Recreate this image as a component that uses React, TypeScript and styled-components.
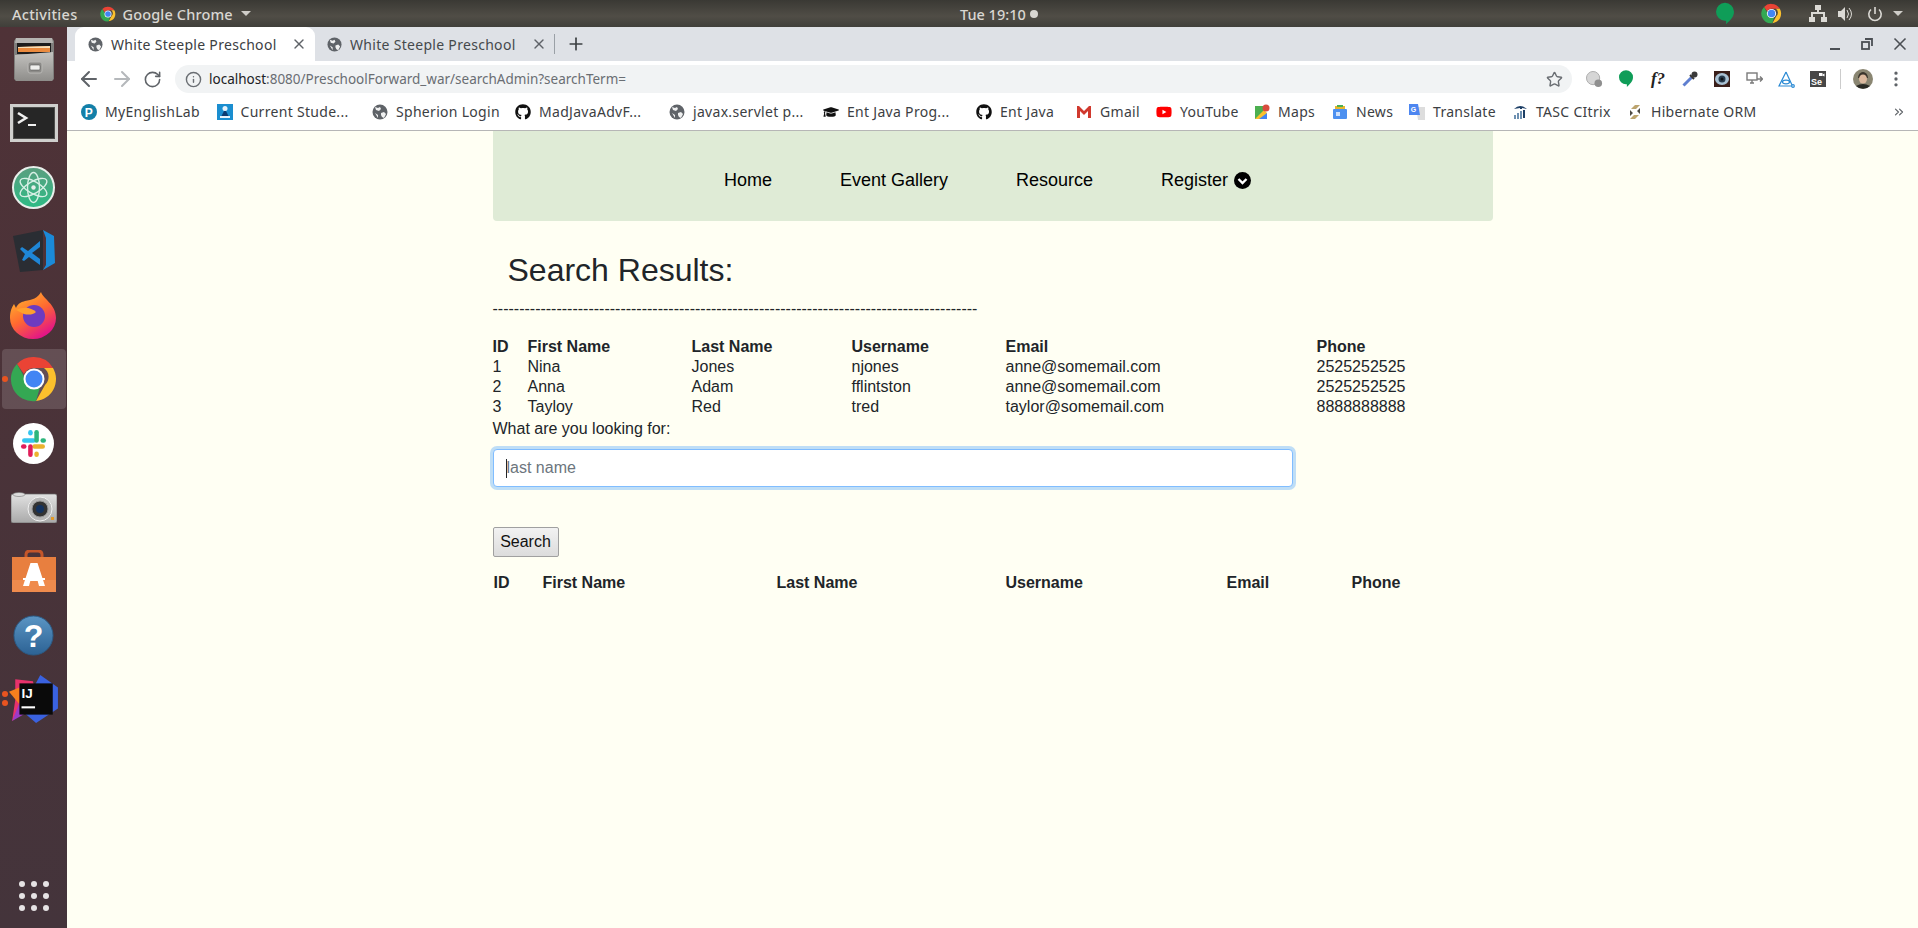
import React from "react";
import styled, { createGlobalStyle } from "styled-components";
import { FaGithub, FaGraduationCap, FaYoutube } from "react-icons/fa";
import { ArrowLeft, ArrowRight, RotateCw, Star, Info, Plus, X, MoreVertical, ChevronsRight } from "lucide-react";

const Global = createGlobalStyle`
  html, body { margin: 0; padding: 0; width: 1918px; height: 928px; overflow: hidden; }
  * { box-sizing: border-box; }
`;
const UI = `"Noto Sans", "Open Sans", sans-serif`;
const WEB = `"Liberation Sans", Arial, sans-serif`;

const Desktop = styled.div`display:flex;flex-direction:column;width:1918px;height:928px;font-family:${WEB};`;
const TopBar = styled.div`height:27px;flex:none;display:grid;grid-template-columns:948px auto 1fr;align-items:center;padding:0 15px 0 12px;background:linear-gradient(#3a3934,#504d46 60%,#403f3a);color:#d9d7d2;font:500 14.5px ${UI};letter-spacing:.3px;`;
const TopLeft = styled.div`display:flex;align-items:center;gap:23px;`;
const AppMenu = styled.div`display:flex;align-items:center;gap:6px;letter-spacing:.15px;`;
const Caret = styled.span`width:0;height:0;border-left:5px solid transparent;border-right:5px solid transparent;border-top:5px solid #cfcdc8;margin-left:2px;`;
const Clock = styled.div`display:flex;align-items:center;gap:4px;letter-spacing:0;`;
const Dot = styled.span`width:8px;height:8px;border-radius:50%;background:#d8d6d1;`;
const TopRight = styled.div`display:flex;align-items:center;justify-content:flex-end;`;
const Gap = styled.span<{ $w: number }>`width:${p => p.$w}px;flex:none;`;
const Body = styled.div`flex:1;display:flex;min-height:0;`;
const Dock = styled.div`width:67px;flex:none;display:flex;flex-direction:column;align-items:center;background:linear-gradient(#4f3237,#44343b);position:relative;`;
const DockSlot = styled.div<{ $active?: boolean }>`width:64px;height:60px;margin:2px 0;flex:none;display:flex;align-items:center;justify-content:center;border-radius:4px;background:${p => p.$active ? "rgba(255,255,255,.14)" : "transparent"};`;
const Spacer = styled.div`flex:1;`;
const Grid9 = styled.div`display:grid;grid-template-columns:repeat(3,6px);gap:6px;margin-bottom:17px;`;
const GridDot = styled.span`width:6px;height:6px;border-radius:50%;background:#e6e3e4;`;
const RunDot = styled.span<{ $top: number }>`position:absolute;left:2px;top:${p => p.$top}px;width:6px;height:6px;border-radius:50%;background:#e95420;`;
const Main = styled.div`flex:1;display:flex;flex-direction:column;min-width:0;`;
const TabStrip = styled.div`height:34px;flex:none;display:flex;align-items:center;background:#dee1e6;padding-left:8px;`;
const Tab = styled.div<{ $active?: boolean }>`width:240px;height:34px;display:flex;align-items:center;padding:0 8px 0 ${p => p.$active ? 13 : 12}px;gap:8px;font:14px ${UI};letter-spacing:.3px;color:${p => p.$active ? "#3c4043" : "#45494c"};background:${p => p.$active ? "#fff" : "transparent"};border-radius:9px 9px 0 0;`;
const TabTitle = styled.span`flex:1;white-space:nowrap;`;
const TabSep = styled.span`width:1px;height:20px;background:#9aa0a6;margin:0 6px 0 -1px;`;
const NewTab = styled.div`display:flex;align-items:center;color:#3c4043;padding-left:5px;`;
const WinBtns = styled.div`margin-left:auto;height:34px;display:flex;align-items:center;gap:17px;padding-right:8px;color:#4b4f54;`;
const Toolbar = styled.div`height:32px;flex:none;display:flex;align-items:flex-start;padding:4px 0 0 10px;background:#fff;color:#5f6368;`;
const NavIcons = styled.div`height:28px;display:flex;align-items:center;gap:9px;margin-right:13px;`;
const Omni = styled.div`width:1397px;height:28px;flex:none;border-radius:14px;background:#f1f3f4;display:flex;align-items:center;padding:0 9px 0 10px;font:13.5px ${UI};color:#6a6e73;gap:7px;`;
const Host = styled.span`color:#202124;`;
const Url = styled.span`flex:1;white-space:nowrap;`;
const Exts = styled.div`flex:1;height:28px;display:flex;align-items:center;padding-left:6px;`;
const ExtCell = styled.div`width:32px;height:28px;flex:none;display:flex;align-items:center;justify-content:center;`;
const FormulaIcon = styled.span`font:italic 700 17px "Liberation Serif", serif;color:#222;`;
const ExtSep = styled.span`width:1px;height:20px;background:#ccc;margin:0 12px 0 6px;`;
const Avatar = styled.div`margin-right:13px;display:flex;`;
const Marks = styled.div`height:38px;flex:none;background:#fff;display:flex;align-items:center;padding-left:14px;border-bottom:1px solid #b6b6b6;font:14px ${UI};letter-spacing:.3px;color:#3c4043;position:relative;`;
const Mark = styled.div<{ $w: number }>`width:${p => p.$w}px;flex:none;display:flex;align-items:center;gap:8px;white-space:nowrap;svg{flex:none;}`;
const MarksMore = styled.div`position:absolute;right:12px;top:11px;color:#5f6368;`;
const Page = styled.div`flex:1;background:#fffff3;color:#212529;display:flex;justify-content:center;font:16px ${WEB};`;
const Container = styled.div`width:1000px;`;
const NavBar = styled.nav`height:90px;padding:8px 10px 0 0;background:#dfebd6;border-radius:0 0 4px 4px;display:flex;align-items:center;justify-content:center;gap:68px;color:#000;font-size:18px;`;
const NavItem = styled.span`display:flex;align-items:center;gap:6px;`;
const Title = styled.h2`margin:30px 0 0;padding-left:15px;font:400 32px/38px ${WEB};`;
const Dashes = styled.div`margin-top:8px;height:24px;line-height:24px;color:#212529;white-space:nowrap;`;
const Table = styled.table`border-collapse:collapse;table-layout:fixed;margin-top:16px;`;
const Th = styled.th<{ $w: number }>`width:${p => p.$w}px;padding:0;height:20px;text-align:left;font-weight:700;line-height:20px;`;
const Td = styled.td`padding:0;height:20px;line-height:20px;`;
const Label = styled.div`height:24px;line-height:24px;`;
const Field = styled.div`width:800px;height:38px;margin-top:8px;border:1px solid #80bdff;border-radius:4px;background:#fff;box-shadow:0 0 0 3px rgba(0,123,255,.25);display:flex;align-items:center;padding-left:12px;color:#6c757d;`;
const Cursor = styled.span`width:1px;height:19px;background:#212529;`;
const Button = styled.button`display:block;margin-top:40px;width:66px;height:30px;padding:0;border:1px solid #a0a0a0;border-radius:2px;background:linear-gradient(#f2f2f2,#dcdcdc);font:16px ${WEB};color:#111;`;
const Table2 = styled(Table)`margin-left:1px;`;

const Globe = ({ s = 16, c = "#5f6368" }: { s?: number; c?: string }) => (
  <svg width={s} height={s} viewBox="0 0 16 16"><circle cx="8" cy="8" r="7.5" fill={c} /><path d="M3 3l3 1 2-1 1 2-2 2-3-1zM9 9l3-1 2 2-2 4-2-1-1-2zM3 9l3 2v3z" fill="#fff" opacity=".9" /></svg>
);
const ChromeLogo = ({ s = 16 }: { s?: number }) => (
  <svg width={s} height={s} viewBox="0 0 48 48">
    <path d="M24 2a22 22 0 0 1 19 11H24a11 11 0 0 0-10 6L7 9A22 22 0 0 1 24 2z" fill="#ea4335" />
    <path d="M43 13a22 22 0 0 1-17 33l9-16a11 11 0 0 0-1-17z" fill="#fbc02d" />
    <path d="M26 46A22 22 0 0 1 7 9l9 16a11 11 0 0 0 14 7l-4 14z" fill="#34a853" />
    <circle cx="24" cy="24" r="10.5" fill="#fff" /><circle cx="24" cy="24" r="8.5" fill="#4285f4" />
  </svg>
);
const Hangout = ({ w = 16, h = 20 }: { w?: number; h?: number }) => (
  <svg width={w} height={h} viewBox="0 0 16 20"><path d="M8 0a8 8 0 0 1 8 8c0 5-4 8-7 11v-3H8A8 8 0 0 1 8 0z" fill="#0f9d58" /></svg>
);
const Cabinet = () => (
  <svg width="40" height="43" viewBox="0 0 40 43">
    <defs><linearGradient id="cab" x1="0" y1="0" x2="0" y2="1"><stop offset="0" stopColor="#c4c3c0" /><stop offset="1" stopColor="#8e8d8a" /></linearGradient></defs>
    <path d="M2 0h36l2 3v38l-2 2H2l-2-2V3z" fill="#7f7e7c" />
    <path d="M2 0h36l1 5H1z" fill="#b5b4b1" />
    <path d="M3 5h34v11H3z" fill="#1d1d1d" />
    <path d="M4 9l32-1v6H4z" fill="#ea8a3e" /><path d="M4 9l32-1v2H4z" fill="#f8e0b8" />
    <path d="M1 17l38-3v27l-1 2H2l-1-2z" fill="url(#cab)" />
    <rect x="14" y="24" width="14" height="11" rx="2" fill="#8c8b88" stroke="#b8b7b4" />
    <rect x="16" y="27" width="10" height="5" rx="1" fill="#efefed" stroke="#555" strokeWidth=".6" />
  </svg>
);
const Terminal = () => (
  <svg width="48" height="38" viewBox="0 0 48 38"><rect width="48" height="38" fill="#cfcfcd" /><rect x="3" y="3" width="42" height="32" fill="#4d4d4b" /><rect x="4" y="4" width="40" height="30" fill="#262626" /><path d="M8 9l8 5-8 5" fill="none" stroke="#f0f0f0" strokeWidth="2.6" /><path d="M18 21h8" stroke="#f0f0f0" strokeWidth="2" /></svg>
);
const Atom = () => (
  <svg width="43" height="43" viewBox="0 0 43 43"><defs><linearGradient id="atm" x1="0" y1="0" x2="0" y2="1"><stop offset="0" stopColor="#5a9e7f" /><stop offset="1" stopColor="#2dbb85" /></linearGradient></defs><circle cx="21.5" cy="21.5" r="20.5" fill="url(#atm)" stroke="#e8efeb" strokeWidth="2" /><g fill="none" stroke="#d7efe5" strokeWidth="1.4"><ellipse cx="21.5" cy="21.5" rx="15" ry="6" transform="rotate(30 21.5 21.5)" /><ellipse cx="21.5" cy="21.5" rx="15" ry="6" transform="rotate(150 21.5 21.5)" /><ellipse cx="21.5" cy="21.5" rx="15" ry="6" transform="rotate(90 21.5 21.5)" /></g><circle cx="21.5" cy="21.5" r="2.2" fill="#e8efeb" /></svg>
);
const VSCode = () => (
  <svg width="42" height="42" viewBox="0 0 42 42"><path d="M0 6l30-6v40L7 42z" fill="#2a2d33" /><path d="M30 0l11 6 1 27-12 7 3-5V8z" fill="#1b8ad8" /><path d="M27 11l-12 10-6-4-2 2 5 5-3 6 2 1 5-4 11 8z" fill="#1f86d6" /><path d="M27 17v12l-8-6z" fill="#2a2d33" /></svg>
);
const Firefox = () => (
  <svg width="47" height="47" viewBox="0 0 47 47"><defs><linearGradient id="ff" x1="0" y1="0" x2=".6" y2="1"><stop offset="0" stopColor="#ffc52e" /><stop offset=".55" stopColor="#ff6a30" /><stop offset="1" stopColor="#e31587" /></linearGradient></defs><path d="M31 0c2 7 15 12 15 26a23 21 0 0 1-46 0c0-7 2-11 4-14l2 4c2-5 6-6 9-7 7-1 13-3 16-9z" fill="url(#ff)" /><circle cx="24" cy="24" r="11" fill="#6e3bc0" /><path d="M6 18c8-4 16-2 20 2-3 3-8 3-12 2z" fill="#ffa02e" /></svg>
);
const Slack = () => (
  <svg width="41" height="41" viewBox="0 0 40 40"><circle cx="20" cy="20" r="20" fill="#fff" /><g strokeWidth="4.4" strokeLinecap="round"><path d="M11 17h9" stroke="#36c5f0" /><path d="M17 9v1" stroke="#36c5f0" /><path d="M23 17V9" stroke="#2eb67d" /><path d="M29 17h1" stroke="#2eb67d" /><path d="M29 23h-8" stroke="#ecb22e" /><path d="M23 30v1" stroke="#ecb22e" /><path d="M17 23v8" stroke="#e01e5a" /><path d="M10 23h1" stroke="#e01e5a" /></g></svg>
);
const Camera = () => (
  <svg width="46" height="31" viewBox="0 0 46 31"><defs><linearGradient id="cam" x1="0" y1="0" x2="0" y2="1"><stop offset="0" stopColor="#e2e2e2" /><stop offset="1" stopColor="#a9a9a9" /></linearGradient></defs><rect y="2" width="46" height="29" rx="2" fill="url(#cam)" stroke="#666" strokeWidth=".7" /><ellipse cx="8" cy="2.5" rx="6" ry="2" fill="#ddd" stroke="#777" strokeWidth=".6" /><circle cx="29" cy="17" r="12" fill="#b7b7b7" stroke="#f0f0f0" /><circle cx="29" cy="17" r="8" fill="#333" stroke="#999" /><circle cx="29" cy="17" r="4" fill="#14325e" /><rect x="40" y="25" width="3" height="3" fill="#e49a2a" /></svg>
);
const Store = () => (
  <svg width="44" height="42" viewBox="0 0 44 42"><path d="M14 10V5q0-4 4-4h8q4 0 4 4v5" fill="none" stroke="#c4562a" strokeWidth="3" /><path d="M0 7h44v35H0z" fill="#e87f3f" /><path d="M0 30h44v12H0z" fill="#ef8b4d" /><path d="M18.5 13h7L33 36h-6l-1.300-5h-7.400L17 36h-6z" fill="#fff" /><rect x="11" y="28" width="22" height="2" fill="#fff" /></svg>
);
const Help = () => (
  <svg width="41" height="41" viewBox="0 0 42 42"><defs><linearGradient id="hlp" x1="0" y1="0" x2="0" y2="1"><stop offset="0" stopColor="#5b95c4" /><stop offset="1" stopColor="#2c6294" /></linearGradient></defs><circle cx="21" cy="21" r="20" fill="url(#hlp)" stroke="#2a5b87" /><text x="21" y="33" textAnchor="middle" fontFamily={WEB} fontWeight="700" fontSize="33" fill="#fff">?</text></svg>
);
const Idea = () => (
  <svg width="50" height="48" viewBox="0 0 48 46"><path d="M6 4l17 2 4 18-24 20 3-20z" fill="#e8326c" /><path d="M0 16l10-4v16z" fill="#f7801e" /><path d="M30 0l17 12v20L26 46 12 34z" fill="#3a62e0" /><path d="M3 44l9-22 12 10z" fill="#9b3bc6" /><rect x="10" y="8" width="32" height="30" fill="#0a0a0a" /><text x="12" y="22" fontFamily={WEB} fontWeight="700" fontSize="13" fill="#fff">IJ</text><rect x="12" y="30" width="13" height="2" fill="#fff" /></svg>
);

const Bm: [number, React.ReactNode, string][] = [
  [135.5, <svg width="16" height="16" viewBox="0 0 16 16"><circle cx="8" cy="8" r="8" fill="#137fa8" /><text x="8" y="12.5" textAnchor="middle" fontSize="12" fontWeight="700" fontFamily={WEB} fill="#fff">P</text></svg>, "MyEnglishLab"],
  [155.5, <svg width="16" height="16" viewBox="0 0 16 16"><rect width="16" height="16" fill="#1a8ed0" /><circle cx="8" cy="4.5" r="2.5" fill="#e8f3fb" /><path d="M4 13l3-6h2l3 6z" fill="#0c3b70" /><rect x="3" y="12" width="10" height="2" fill="#e8f3fb" /></svg>, "Current Stude..."],
  [143, <Globe />, "Spherion Login"],
  [154, <FaGithub size={16} color="#111" />, "MadJavaAdvF..."],
  [154, <Globe />, "javax.servlet p..."],
  [153, <FaGraduationCap size={16} color="#111" />, "Ent Java Prog..."],
  [100, <FaGithub size={16} color="#111" />, "Ent Java"],
  [80, <svg width="16" height="14" viewBox="0 0 16 14"><path d="M1 1v12h3V6l4 4 4-4v7h3V1h-2L8 6 3 1z" fill="#d0392e" /></svg>, "Gmail"],
  [98, <FaYoutube size={16} color="#f00" />, "YouTube"],
  [78, <svg width="16" height="16" viewBox="0 0 16 16"><path d="M1 2h9v13H1z" fill="#4caf50" /><path d="M1 15l9-9 3 3v6z" fill="#fbc02d" /><path d="M5 15l8-6v6z" fill="#4285f4" /><circle cx="12" cy="4" r="3.5" fill="#d84c3e" /></svg>, "Maps"],
  [77, <svg width="16" height="16" viewBox="0 0 16 16"><rect x="1" y="5" width="14" height="10" rx="1" fill="#4d90f0" /><path d="M3 2h10v3H3z" fill="#e9b62c" /><path d="M5 1h6v2H5z" fill="#4caf50" /><path d="M4 8h4v4H4z" fill="#cfe0fb" /></svg>, "News"],
  [103, <svg width="16" height="16" viewBox="0 0 16 16"><path d="M7 3h9v13H9z" fill="#ddd" /><path d="M0 0h9l2 11H0z" fill="#4d86f0" /><text x="4.5" y="8" textAnchor="middle" fontSize="7" fontWeight="700" fontFamily={WEB} fill="#fff">G</text></svg>, "Translate"],
  [115, <svg width="16" height="16" viewBox="0 0 16 16"><path d="M2 5q6-6 13 0l-5-1v1H8V4z" fill="#1d3f66" /><path d="M2 11h2v4H2zM5 9h2v6H5zM8 7h2v8H8z" fill="#6d90b1" /><path d="M11 6h2v8h-2z" fill="#1d3f66" /></svg>, "TASC CItrix"],
  [130, <svg width="16" height="16" viewBox="0 0 16 16"><path d="M4 5l4-4h5L9 5zM12 11l-4 4H3l4-4z" fill="#bca46e" /><path d="M3 6l3 3-3 3zM13 4v6l-3-3z" fill="#4d4a44" /></svg>, "Hibernate ORM"],
];

const head1 = [35, 164, 160, 154, 311, 140];
const head2 = [49, 234, 229, 221, 125, 100];
const names = ["ID", "First Name", "Last Name", "Username", "Email", "Phone"];
const rows = [
  ["1", "Nina", "Jones", "njones", "anne@somemail.com", "2525252525"],
  ["2", "Anna", "Adam", "fflintston", "anne@somemail.com", "2525252525"],
  ["3", "Tayloy", "Red", "tred", "taylor@somemail.com", "8888888888"],
];

export default function App() {
  return (
    <Desktop>
      <Global />
      <TopBar>
        <TopLeft>
          <span>Activities</span>
          <AppMenu><ChromeLogo s={16} /><span>Google Chrome</span><Caret /></AppMenu>
        </TopLeft>
        <Clock><span>Tue 19:10</span><Dot /></Clock>
        <TopRight>
          <Hangout w={18} h={24} />
          <Gap $w={27} />
          <ChromeLogo s={21} />
          <Gap $w={27} />
          <svg width="18" height="18" viewBox="0 0 18 18" fill="#dcdad5"><path d="M6 0h6v5H10v2h6v5h2v5h-6v-5h2V9H4v3h2v5H0v-5h2V7h6V5H6z" /></svg>
          <Gap $w={10} />
          <svg width="16" height="16" viewBox="0 0 16 16" fill="#dcdad5"><path d="M1 5h3l4-4v14l-4-4H1z" /><path d="M10 4q3 4 0 8M12 2q5 6 0 12" fill="none" stroke="#dcdad5" /></svg>
          <Gap $w={14} />
          <svg width="16" height="16" viewBox="0 0 16 16" fill="none" stroke="#dcdad5" strokeWidth="1.6"><path d="M8 1v7M4 3.5a6.2 6.2 0 1 0 8 0" /></svg>
          <Gap $w={8} />
          <Caret />
        </TopRight>
      </TopBar>
      <Body>
        <Dock>
          <DockSlot><Cabinet /></DockSlot>
          <DockSlot><Terminal /></DockSlot>
          <DockSlot><Atom /></DockSlot>
          <DockSlot><VSCode /></DockSlot>
          <DockSlot><Firefox /></DockSlot>
          <DockSlot $active><RunDot $top={349} /><ChromeLogo s={48} /></DockSlot>
          <DockSlot><Slack /></DockSlot>
          <DockSlot><Camera /></DockSlot>
          <DockSlot><Store /></DockSlot>
          <DockSlot><Help /></DockSlot>
          <DockSlot><RunDot $top={664} /><RunDot $top={673} /><Idea /></DockSlot>
          <Spacer />
          <Grid9>{Array.from({ length: 9 }).map((_, i) => <GridDot key={i} />)}</Grid9>
        </Dock>
        <Main>
          <TabStrip>
            <Tab $active><Globe s={15} /><TabTitle>White Steeple Preschool</TabTitle><X size={16} color="#5f6368" /></Tab>
            <Tab><Globe s={15} /><TabTitle>White Steeple Preschool</TabTitle><X size={16} color="#5f6368" /></Tab>
            <TabSep />
            <NewTab><Plus size={20} /></NewTab>
            <WinBtns>
              <svg width="15" height="12" viewBox="0 0 15 12"><rect x="1" y="10" width="10" height="2" fill="#4b4f54" /></svg>
              <svg width="12" height="12" viewBox="0 0 12 12" fill="none" stroke="#4b4f54" strokeWidth="1.8"><rect x="1" y="4" width="7" height="7" /><path d="M4 1h7v7" /></svg>
              <X size={20} />
            </WinBtns>
          </TabStrip>
          <Toolbar>
            <NavIcons>
              <ArrowLeft size={24} />
              <ArrowRight size={24} color="#b5b8bb" />
              <RotateCw size={19} />
            </NavIcons>
            <Omni>
              <Info size={17} />
              <Url><Host>localhost</Host>:8080/PreschoolForward_war/searchAdmin?searchTerm=</Url>
              <Star size={17} />
            </Omni>
            <Exts>
              <ExtCell><svg width="17" height="17" viewBox="0 0 18 18"><circle cx="7.5" cy="7.5" r="7" fill="#d6d6d6" stroke="#aaa" /><circle cx="13" cy="13" r="4" fill="#8f8f8f" /></svg></ExtCell>
              <ExtCell><Hangout w={14} h={18} /></ExtCell>
              <ExtCell><FormulaIcon>f?</FormulaIcon></ExtCell>
              <ExtCell><svg width="16" height="16" viewBox="0 0 16 16"><path d="M1.5 14.5l8-8" stroke="#5f7fd0" strokeWidth="3" /><path d="M8 4l4 4" stroke="#333" strokeWidth="2" /><circle cx="12.5" cy="3.5" r="3" fill="#3a3a3a" /></svg></ExtCell>
              <ExtCell><svg width="16" height="16" viewBox="0 0 16 16"><rect width="16" height="16" fill="#3a1f1a" /><ellipse cx="8" cy="8" rx="7" ry="6" fill="#a9c2d4" /><circle cx="8" cy="8" r="3.5" fill="#263a4c" /><circle cx="8" cy="8" r="1.5" fill="#0d1116" /></svg></ExtCell>
              <ExtCell><svg width="17" height="14" viewBox="0 0 17 14" fill="none" stroke="#7a7a7a" strokeWidth="1.4"><rect x="1" y="1" width="10" height="7" /><path d="M4 11h4M6 8v3" /><path d="M11 7h5M14 4.5L16.4 7 14 9.5" /></svg></ExtCell>
              <ExtCell><svg width="17" height="17" viewBox="0 0 17 17" fill="none" stroke="#2a8ad4" strokeWidth="1.2"><path d="M8 1L1 15h13" /><path d="M8 1l6 13" /><ellipse cx="8" cy="11" rx="3.5" ry="1.8" /><circle cx="15" cy="15" r="1.3" /></svg></ExtCell>
              <ExtCell><svg width="16" height="16" viewBox="0 0 16 16"><rect width="16" height="16" fill="#474747" /><rect x="9" y="2" width="3.5" height="3" fill="#fff" /><path d="M12.5 3.5l2-1v3l-2-1z" fill="#fff" /><text x="6.5" y="14" textAnchor="middle" fontSize="9" fontWeight="700" fontFamily={WEB} fill="#fff">Se</text></svg></ExtCell>
              <ExtSep />
              <Avatar><svg width="20" height="20" viewBox="0 0 20 20"><circle cx="10" cy="10" r="10" fill="#8a8672" /><path d="M5 9a5 6 0 0 1 10 0z" fill="#3a352c" /><ellipse cx="10" cy="10" rx="4" ry="4.5" fill="#dcb99e" /><path d="M3 17q7-4 14 0a10 10 0 0 1-14 0z" fill="#2a2a24" /></svg></Avatar>
              <MoreVertical size={20} />
            </Exts>
          </Toolbar>
          <Marks>
            {Bm.map(([w, icon, label], i) => <Mark key={i} $w={w}>{icon}<span>{label}</span></Mark>)}
            <MarksMore><ChevronsRight size={14} /></MarksMore>
          </Marks>
          <Page>
            <Container>
              <NavBar>
                <NavItem>Home</NavItem>
                <NavItem>Event Gallery</NavItem>
                <NavItem>Resource</NavItem>
                <NavItem>Register<svg width="17" height="17" viewBox="0 0 17 17"><circle cx="8.5" cy="8.5" r="8.5" fill="#000" /><path d="M4.5 7l4 4 4-4" fill="none" stroke="#fff" strokeWidth="2.4" /></svg></NavItem>
              </NavBar>
              <Title>Search Results:</Title>
              <Dashes>{"-".repeat(91)}</Dashes>
              <Table>
                <thead><tr>{names.map((n, i) => <Th key={n} $w={head1[i]}>{n}</Th>)}</tr></thead>
                <tbody>{rows.map(r => <tr key={r[0]}>{r.map((c, i) => <Td key={i}>{c}</Td>)}</tr>)}</tbody>
              </Table>
              <Label>What are you looking for:</Label>
              <Field><Cursor />last name</Field>
              <Button>Search</Button>
              <Table2>
                <thead><tr>{names.map((n, i) => <Th key={n} $w={head2[i]}>{n}</Th>)}</tr></thead>
              </Table2>
            </Container>
          </Page>
        </Main>
      </Body>
    </Desktop>
  );
}
